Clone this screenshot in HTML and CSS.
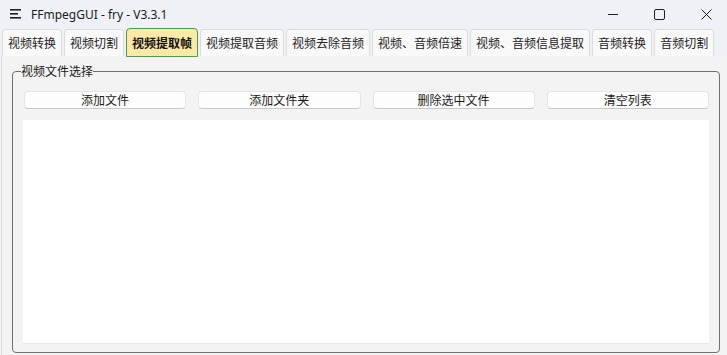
FILE: index.html
```html
<!DOCTYPE html>
<html>
<head>
  <title>FFmpegGUI - fry - V3.3.1</title>
  <link rel="stylesheet" href="styles.css">
</head>
<body>
  <div class="window">
    <div class="titlebar">
      <svg class="app-icon" width="12" height="10" viewBox="0 0 12 10">
        <rect x="0" y="0" width="11" height="1.6" fill="#1f1f1f"/>
        <rect x="0" y="4" width="8" height="1.6" fill="#1f1f1f"/>
        <rect x="0" y="8" width="11" height="1.6" fill="#1f1f1f"/>
      </svg>
      <span class="title">FFmpegGUI - fry - V3.3.1</span>
      <div class="controls">
        <span class="ctl">
          <svg width="10" height="10" viewBox="0 0 10 10"><line x1="0" y1="5.5" x2="10" y2="5.5" stroke="#1f1f1f" stroke-width="1"/></svg>
        </span>
        <span class="ctl">
          <svg width="11" height="11" viewBox="0 0 11 11"><rect x="0.5" y="0.5" width="10" height="10" rx="1.5" fill="none" stroke="#1f1f1f" stroke-width="1"/></svg>
        </span>
        <span class="ctl">
          <svg width="11" height="11" viewBox="0 0 11 11"><path d="M0.5 0.5 L10.5 10.5 M10.5 0.5 L0.5 10.5" stroke="#1f1f1f" stroke-width="1"/></svg>
        </span>
      </div>
    </div>

    <div class="tabs">
      <div class="tab">视频转换</div>
      <div class="tab">视频切割</div>
      <div class="tab active">视频提取帧</div>
      <div class="tab">视频提取音频</div>
      <div class="tab">视频去除音频</div>
      <div class="tab">视频、音频倍速</div>
      <div class="tab">视频、音频信息提取</div>
      <div class="tab">音频转换</div>
      <div class="tab">音频切割</div>
    </div>

    <div class="content">
      <fieldset class="group">
        <legend>视频文件选择</legend>
        <div class="buttons">
          <button>添加文件</button>
          <button>添加文件夹</button>
          <button>删除选中文件</button>
          <button>清空列表</button>
        </div>
        <div class="file-list"></div>
      </fieldset>
    </div>
  </div>
</body>
</html>
```

FILE: styles.css
```css
body {
  margin: 0;
  font-family: "Noto Sans CJK SC", "Noto Sans", sans-serif;
  font-size: 12px;
  color: #1a1a1a;
  background-color: #f3f3f3;
}

.window {
  width: 727px;
  height: 355px;
  display: flex;
  flex-direction: column;
  overflow: hidden;
}

.titlebar {
  height: 28px;
  display: flex;
  align-items: center;
  background-color: #eef2f7;
}
.app-icon {
  margin-left: 10px;
  margin-right: 9px;
}
.title {
  font-family: "Noto Sans", sans-serif;
  font-size: 12px;
  color: #1a1a1a;
}
.controls {
  margin-left: auto;
  margin-right: -3px;
  display: flex;
}
.ctl {
  width: 47px;
  height: 28px;
  display: flex;
  align-items: center;
  justify-content: center;
}

.tabs {
  height: 28px;
  display: flex;
  align-items: flex-end;
  padding-left: 2px;
  gap: 2px;
  background-color: #eef1f5;
}
.tab {
  height: 26px;
  line-height: 26px;
  padding: 0 5px;
  background-color: #f9f9f9;
  border: 1px solid #dcdcdc;
  border-bottom: none;
  border-radius: 4px 4px 0 0;
  white-space: nowrap;
  color: #222;
}
.tab.active {
  height: 27px;
  line-height: 27px;
  margin: 0 0 -1px;
  padding: 0 5px;
  font-weight: bold;
  color: #111;
  background-color: #fde9a6;
  border: 1px solid #4f9a4f;
}

.content {
  flex: 1;
  padding: 7px 7px 2px 10px;
  border-left: 1px solid #dadada;
  margin-left: 1px;
  display: flex;
}

.group {
  flex: 1;
  margin: 0;
  padding: 12px 10px 8px 11px;
  border: 1px solid #707070;
  border-radius: 4px;
  display: flex;
  flex-direction: column;
  min-width: 0;
}
.group legend {
  padding: 0;
  margin-left: -3px;
  font-size: 12px;
  line-height: 16px;
  color: #1a1a1a;
}

.buttons {
  display: flex;
  gap: 12px;
}
.buttons button {
  flex: 1;
  height: 18px;
  padding: 0;
  font-family: "Noto Sans CJK SC", "Noto Sans", sans-serif;
  font-size: 12px;
  line-height: 16px;
  color: #1a1a1a;
  background-color: #fdfdfd;
  border: 1px solid #e5e5e5;
  border-bottom-color: #c8c8c8;
  border-radius: 4px;
}

.file-list {
  flex: 1;
  margin-top: 11px;
  margin-left: -1px;
  background-color: #fff;
  border-bottom: 1px solid #e8e8e8;
}
```
